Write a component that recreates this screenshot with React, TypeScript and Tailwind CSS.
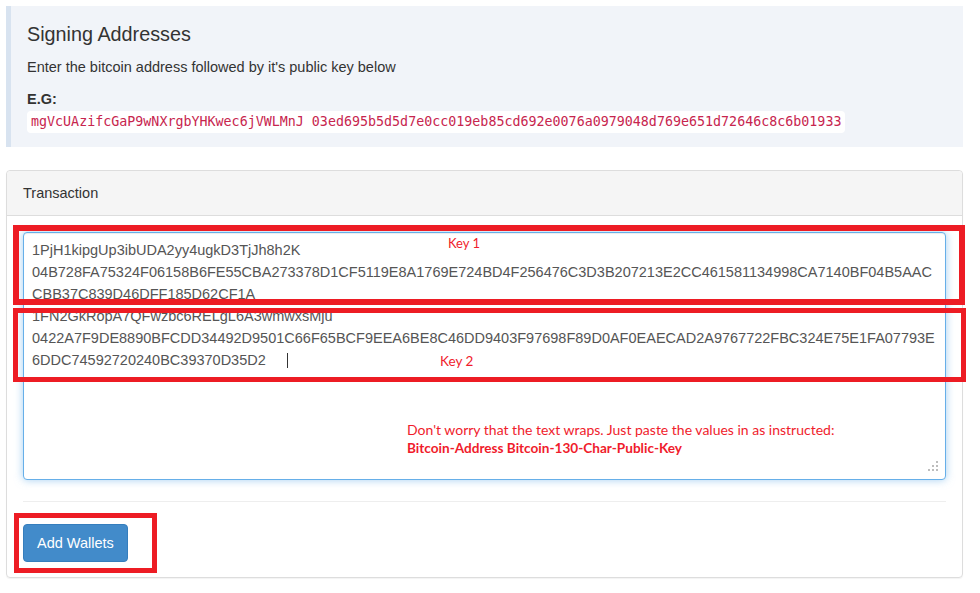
import React from "react";

const sans = { fontFamily: '"Liberation Sans", Arial, sans-serif' };

const keyLines = [
  "1PjH1kipgUp3ibUDA2yy4ugkD3TjJh8h2K",
  "04B728FA75324F06158B6FE55CBA273378D1CF5119E8A1769E724BD4F256476C3D3B207213E2CC461581134998CA7140BF04B5AAC",
  "CBB37C839D46DFF185D62CF1A",
  "1FN2GkRopA7QFwzbc6RELgL6A3wmwxsMju",
  "0422A7F9DE8890BFCDD34492D9501C66F65BCF9EEA6BE8C46DD9403F97698F89D0AF0EAECAD2A9767722FBC324E75E1FA07793E",
];

const ResizeGrip = () => (
  <svg width="12" height="12" viewBox="0 0 12 12" className="absolute right-[6px] bottom-[6px]">
    <g fill="#bdbdbd">
      <rect x="9" y="0" width="2" height="2" />
      <rect x="5" y="4" width="2" height="2" />
      <rect x="9" y="4" width="2" height="2" />
      <rect x="1" y="8" width="2" height="2" />
      <rect x="5" y="8" width="2" height="2" />
      <rect x="9" y="8" width="2" height="2" />
    </g>
  </svg>
);

const Callout = () => (
  <div className="bg-[#f1f4f9] border-l-[5px] border-[#d8e3f0] pl-[16px] pt-[17px] pb-[14px] text-[#333]">
    <h4 className="text-[19.8px] leading-[22px] font-normal">Signing Addresses</h4>
    <p className="mt-3 text-[14.5px] leading-5">Enter the bitcoin address followed by it's public key below</p>
    <p className="mt-3 text-[14.5px] leading-5 font-bold">E.G:</p>
    <code
      className="mt-[2px] inline-block bg-white rounded px-1 py-[2px] text-[13.33px] leading-[18px] text-[#c7254e]"
      style={{ fontFamily: '"DejaVu Sans Mono", "Liberation Mono", monospace' }}
    >
      mgVcUAzifcGaP9wNXrgbYHKwec6jVWLMnJ 03ed695b5d5d7e0cc019eb85cd692e0076a0979048d769e651d72646c8c6b01933
    </code>
  </div>
);

const Annotations = () => {
  const note = { fontFamily: 'Lato, "Open Sans", sans-serif' };
  return (
    <>
      <div className="absolute left-[13px] top-[225px] w-[952px] h-[80px] border-[6px] border-[#ed1c24]" />
      <div className="absolute left-[13px] top-[308px] w-[953px] h-[74px] border-[5px] border-[#ed1c24]" />
      <div className="absolute left-[14px] top-[513px] w-[143px] h-[60px] border-[5px] border-[#ed1c24]" />
      <span className="absolute left-[448px] top-[235px] text-[13px] leading-4 text-[#f01c2c]" style={note}>Key 1</span>
      <span className="absolute left-[440px] top-[353px] text-[13.5px] leading-4 text-[#f01c2c]" style={note}>Key 2</span>
      <div className="absolute left-[407px] top-[421px] leading-[18px] text-[#f01c2c] whitespace-nowrap" style={note}>
        <div className="text-[14px]">Don't worry that the text wraps. Just paste the values in as instructed:</div>
        <div className="text-[13.6px] font-bold">Bitcoin-Address Bitcoin-130-Char-Public-Key</div>
      </div>
    </>
  );
};

export default function App() {
  return (
    <div className="relative w-[980px] h-[593px] bg-white overflow-hidden" style={sans}>
      <div className="pt-[6px] pl-[6px] w-[963px]">
        <Callout />
        <div className="mt-[23px] border border-[#ddd] rounded shadow-[0_1px_1px_rgba(0,0,0,0.05)]">
          <div className="bg-[#f5f5f5] border-b border-[#ddd] rounded-t px-4 py-3 text-[14.5px] leading-5 text-[#333]">
            Transaction
          </div>
          <div className="px-4 pt-4 pb-[15px]">
            <div className="relative h-[248px] border border-[#66afe9] rounded bg-white px-2 pt-[6px] overflow-hidden shadow-[inset_0_1px_1px_rgba(0,0,0,0.075),0_0_8px_rgba(102,175,233,0.6)] text-[14.5px] leading-[22px] text-[#555]">
              {keyLines.map((l) => (
                <div key={l} className="whitespace-pre">{l}</div>
              ))}
              <div className="whitespace-pre flex items-center">
                6DDC74592720240BC39370D35D2
                <span className="inline-block w-px h-[15px] bg-[#333] ml-[21px]" />
              </div>
              <ResizeGrip />
            </div>
            <hr className="mt-[21px] mb-[22px] border-t border-[#eee]" />
            <button className="bg-[#428bca] border border-[#357ebd] rounded text-white text-[14.5px] leading-5 px-[13px] py-[8px]">
              Add Wallets
            </button>
          </div>
        </div>
      </div>
      <Annotations />
    </div>
  );
}
